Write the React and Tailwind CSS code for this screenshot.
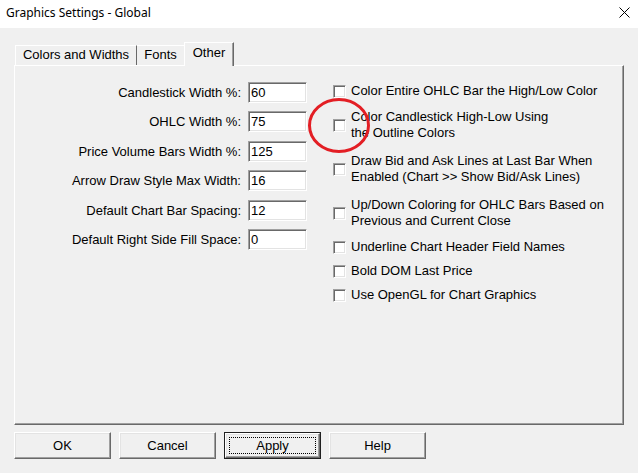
import React from 'react';

const fields = [
  { label: 'Candlestick Width %:', value: '60' },
  { label: 'OHLC Width %:', value: '75' },
  { label: 'Price Volume Bars Width %:', value: '125' },
  { label: 'Arrow Draw Style Max Width:', value: '16' },
  { label: 'Default Chart Bar Spacing:', value: '12' },
  { label: 'Default Right Side Fill Space:', value: '0' },
];

const options = [
  { lines: ['Color Entire OHLC Bar the High/Low Color'], mt: 'mt-[1px]' },
  { lines: ['Color Candlestick High-Low Using', 'the Outline Colors'], mt: 'mt-[10px]' },
  { lines: ['Draw Bid and Ask Lines at Last Bar When', 'Enabled (Chart >> Show Bid/Ask Lines)'], mt: 'mt-[12px]' },
  { lines: ['Up/Down Coloring for OHLC Bars Based on', 'Previous and Current Close'], mt: 'mt-[12px]' },
  { lines: ['Underline Chart Header Field Names'], mt: 'mt-[10px]' },
  { lines: ['Bold DOM Last Price'], mt: 'mt-[8px]' },
  { lines: ['Use OpenGL for Chart Graphics'], mt: 'mt-[8px]' },
];

const sunken =
  'border border-t-[#a0a0a0] border-l-[#a0a0a0] border-b-white border-r-white bg-white shadow-[inset_1px_1px_0_#696969,inset_-1px_-1px_0_#e3e3e3]';

const raised =
  'border border-t-white border-l-white border-b-[#696969] border-r-[#696969] shadow-[inset_-1px_-1px_0_#a0a0a0,inset_1px_1px_0_#e3e3e3]';

const Button = ({ children, isDefault }) => (
  <div
    className={`w-[97px] h-[27px] bg-[#f0f0f0] flex items-center justify-center ${
      isDefault ? 'border border-[#202020] p-0' : raised
    }`}
  >
    {isDefault ? (
      <div className={`w-full h-full flex items-center justify-center p-[3px] ${raised}`}>
        <div className="w-full h-full border border-dotted border-black flex items-center justify-center">
          {children}
        </div>
      </div>
    ) : (
      children
    )}
  </div>
);

export default function App() {
  return (
    <div className="w-[638px] h-[473px] bg-[#f0f0f0] relative flex flex-col font-['Liberation_Sans',Arial,sans-serif] text-[13px] text-black overflow-hidden">
      {/* Title bar */}
      <div className="h-[28px] bg-white flex items-center justify-between pl-[6px] pr-[8px] shrink-0">
        <span className="font-['Noto_Sans',sans-serif] text-[12px] leading-none -mt-[2px]">
          Graphics Settings - Global
        </span>
        <svg width="11" height="11" viewBox="0 0 11 11" className="-mt-[4px]">
          <path d="M0.5 0.5 L10.5 10.5 M10.5 0.5 L0.5 10.5" stroke="#000" strokeWidth="1" />
        </svg>
      </div>

      {/* Tabs */}
      <div className="flex items-end mt-[14px] ml-[15px] h-[23px]">
        <div className="w-[122px] h-[20px] border-t border-l border-t-white border-l-white border-r border-r-[#696969] flex items-center justify-center pb-[1px]">
          Colors and Widths
        </div>
        <div className="w-[47px] h-[20px] border-t border-t-white flex items-center justify-center pb-[1px]">
          Fonts
        </div>
        <div className="relative z-10 w-[50px] h-[24px] -mb-[1px] bg-[#f0f0f0] border-t border-l border-t-white border-l-white border-r border-r-[#696969] shadow-[inset_-1px_0_0_#a0a0a0] flex items-center justify-center pb-[4px]">
          Other
        </div>
      </div>

      {/* Panel */}
      <div className="ml-[14px] w-[610px] h-[360px] border border-t-white border-l-white border-r-[#696969] border-b-[#696969] shadow-[inset_-1px_-1px_0_#a0a0a0] flex pt-[16px]">
        <div className="flex flex-col gap-[8.4px]">
          {fields.map((f) => (
            <div key={f.label} className="flex items-center h-[21px]">
              <div className="w-[227px] text-right pr-[1px] leading-none">{f.label}</div>
              <div className={`ml-[6px] w-[59px] h-[21px] flex items-center pl-[2px] leading-none ${sunken}`}>
                {f.value}
              </div>
            </div>
          ))}
        </div>

        <div className="ml-[26px] flex flex-col">
          {options.map((o) => (
            <div key={o.lines[0]} className={`flex items-center ${o.mt}`}>
              <div className={`w-[13px] h-[13px] shrink-0 ${sunken}`} />
              <div className="ml-[5px] leading-[16px]">
                {o.lines.map((l) => (
                  <div key={l}>{l}</div>
                ))}
              </div>
            </div>
          ))}
        </div>
      </div>

      {/* Buttons */}
      <div className="flex gap-[8px] ml-[14px] mt-[7px]">
        <Button>OK</Button>
        <Button>Cancel</Button>
        <Button isDefault>Apply</Button>
        <Button>Help</Button>
      </div>

      {/* Red annotation circle */}
      <svg className="absolute left-[306px] top-[96px]" width="66" height="60" viewBox="0 0 66 60">
        <ellipse cx="33" cy="29.5" rx="29.5" ry="26" fill="none" stroke="#e31e24" strokeWidth="3" />
      </svg>
    </div>
  );
}
